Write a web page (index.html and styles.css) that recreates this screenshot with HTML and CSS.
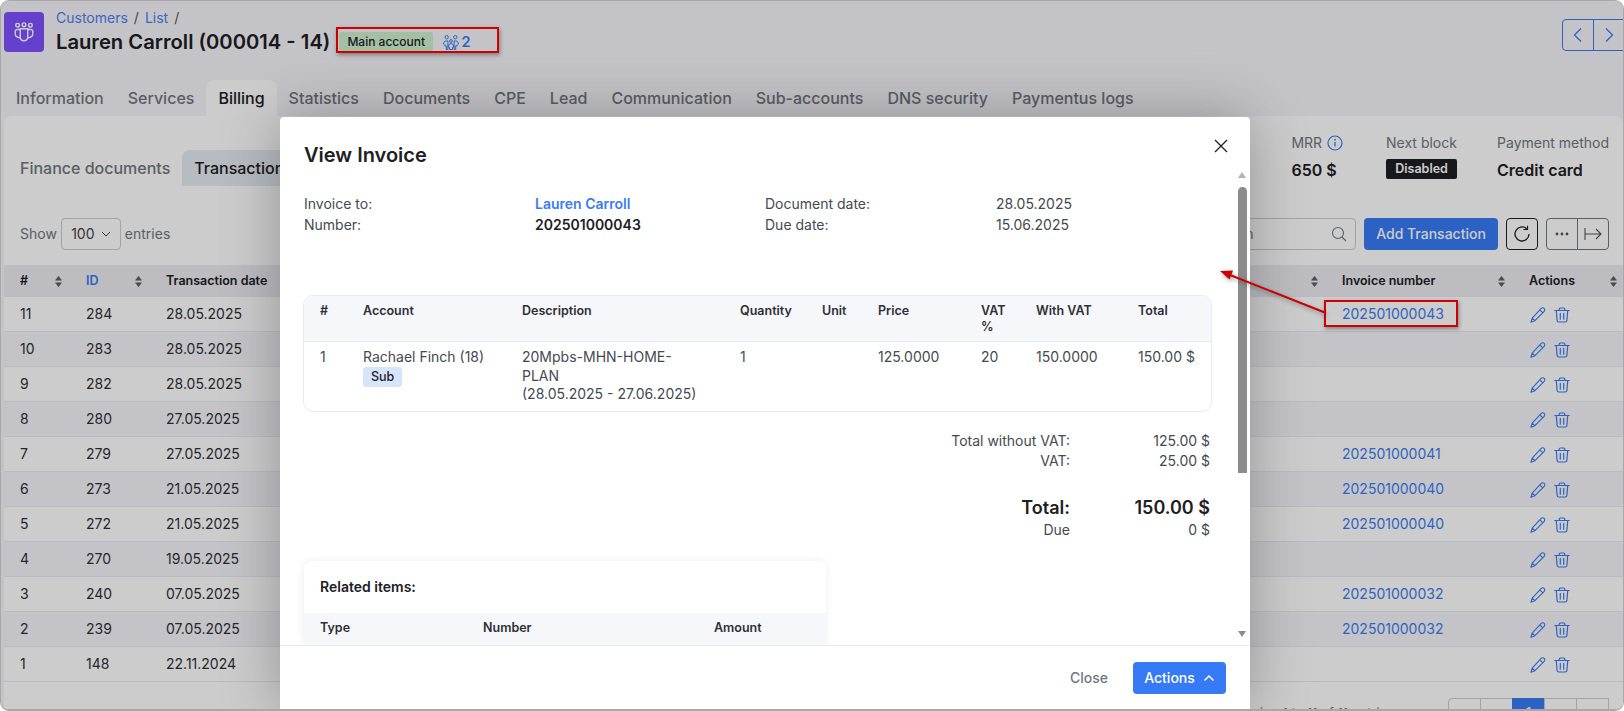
FILE: index.html
```html
<!DOCTYPE html>
<html lang="en">
<head>
<meta charset="utf-8">
<title>View Invoice</title>
<link rel="stylesheet" href="styles.css">
</head>
<body>
<svg class="sprites" width="0" height="0" aria-hidden="true">
  <symbol id="pencil" viewBox="0 0 16 16"><path d="M11.2 1.400a1.900 1.900 0 0 1 3 2.900L4.900 13.700.9 15.200l1.300-4.100zM9.800 2.900l3.100 3M2.200 11.100l2.700 2.600" fill="none" stroke="currentColor" stroke-width="1.100" stroke-linejoin="round"/></symbol>
  <symbol id="trash" viewBox="0 0 16 16"><path d="M.8 3.500h14.400M5.200 3.500V2.200c0-.7.500-1.200 1.200-1.200h3.200c.7 0 1.200.5 1.200 1.200v1.300M2.300 3.500l.8 10c.1.9.7 1.500 1.600 1.500h6.600c.9 0 1.500-.6 1.600-1.500l.8-10M6.300 6.400v5.800M9.700 6.400v5.800" fill="none" stroke="currentColor" stroke-width="1.200" stroke-linecap="round" stroke-linejoin="round"/></symbol>
  <symbol id="sort" viewBox="0 0 8 14"><path d="M4 1 7.400 5.600H.6zM4 13 .6 8.400h6.800z" fill="currentColor" stroke="currentColor" stroke-width=".6" stroke-linejoin="round"/></symbol>
  <symbol id="info" viewBox="0 0 16 16"><circle cx="8" cy="8" r="7" fill="none" stroke="currentColor" stroke-width="1.200"/><path d="M8 7v4.600" stroke="currentColor" stroke-width="1.300"/><circle cx="8" cy="4.700" r=".9" fill="currentColor"/></symbol>
</svg>

<div class="frame">
  <header class="top">
    <div class="tile">
      <svg width="20" height="20" viewBox="0 0 24 24" fill="none" stroke="#fff" stroke-width="1.700">
        <circle cx="4.300" cy="3.800" r="2.200"/><circle cx="12" cy="3.200" r="2.200"/><circle cx="19.700" cy="3.800" r="2.200"/>
        <path d="M7.500 9H4C2.500 9 1.500 10 1.500 11.500v3C1.500 16.500 3.500 18.500 7.500 19M16.500 9H20c1.500 0 2.500 1 2.500 2.500v3c0 2-2 4-6 4.500"/>
        <path d="M7.500 8h9v10c0 2.600-2 4.500-4.500 4.500S7.500 20.600 7.500 18z"/>
      </svg>
    </div>
    <div class="heading">
      <nav class="crumbs"><a>Customers</a><span>/</span><a>List</a><span>/</span></nav>
      <div class="title-row">
        <h1>Lauren Carroll (000014 - 14)</h1>
        <span class="main-badge">Main account</span>
        <a class="sub-count">
          <svg width="16" height="15" viewBox="0 0 16 15" fill="none" stroke="currentColor" stroke-width="1">
            <circle cx="3.700" cy="2.200" r="1.700"/><circle cx="12.300" cy="2.200" r="1.700"/><circle cx="8" cy="6" r="1.400"/>
            <path d="M.6 9.500c0-2.400 1-3.500 2.300-3.500h2v8.500H3.300v-3.700H1.800V9.500M15.400 9.500c0-2.400-1-3.500-2.300-3.500h-2v8.500h1.600v-3.700h1.500V9.500M5.500 11c0-1.500.8-2.300 2.500-2.300s2.500.8 2.500 2.300v1.300h-1v2.200h-3v-2.200h-1z"/>
          </svg>
          2
        </a>
      </div>
    </div>
    <div class="pager-nav">
      <button class="nav-btn"><svg width="12" height="16" viewBox="0 0 12 16" fill="none" stroke="currentColor" stroke-width="1.300"><path d="M9 1.500 2.500 8 9 14.500"/></svg></button>
      <button class="nav-btn"><svg width="12" height="16" viewBox="0 0 12 16" fill="none" stroke="currentColor" stroke-width="1.300"><path d="M3 1.500 9.500 8 3 14.500"/></svg></button>
    </div>
  </header>

  <nav class="tabs">
    <a>Information</a><a>Services</a><a class="active">Billing</a><a>Statistics</a><a>Documents</a><a>CPE</a><a>Lead</a><a>Communication</a><a>Sub-accounts</a><a>DNS security</a><a>Paymentus logs</a>
  </nav>

  <main class="card">
    <div class="card-head">
      <div class="subtabs"><a>Finance documents</a><a class="active">Transactions</a></div>
      <div class="stats">
        <svg class="info peek" width="16" height="16"><use href="#info"/></svg>
        <div class="stat"><div class="stat-label">MRR <svg class="info" width="16" height="16"><use href="#info"/></svg></div><div class="stat-value">650 $</div></div>
        <div class="stat"><div class="stat-label">Next block</div><div class="stat-value"><span class="disabled">Disabled</span></div></div>
        <div class="stat"><div class="stat-label">Payment method</div><div class="stat-value">Credit card</div></div>
      </div>
    </div>

    <div class="toolbar">
      <label class="show">Show <span class="select">100 <svg width="10" height="6" viewBox="0 0 10 6" fill="none" stroke="currentColor"><path d="M1 1l4 4 4-4"/></svg></span> entries</label>
      <div class="tools">
        <div class="search"><span>Search</span>
          <svg width="16" height="16" viewBox="0 0 16 16" fill="none" stroke="currentColor" stroke-width="1.100"><circle cx="7" cy="7" r="5.500"/><path d="m11 11 4 4"/></svg>
        </div>
        <button class="add">Add Transaction</button>
        <button class="tool refresh"><svg width="18" height="18" viewBox="0 0 18 18" fill="none" stroke="currentColor" stroke-width="1.300"><path d="M13.700 3.800A7 7 0 1 0 16 9"/><path d="M10.500 4.500h4V.8" stroke-width="1.200"/></svg></button>
        <div class="tool-group">
          <button class="tool"><svg width="14" height="4" viewBox="0 0 14 4" fill="currentColor"><circle cx="2" cy="2" r="1.400"/><circle cx="7" cy="2" r="1.400"/><circle cx="12" cy="2" r="1.400"/></svg></button>
          <button class="tool"><svg width="18" height="14" viewBox="0 0 18 14" fill="none" stroke="currentColor" stroke-width="1.100"><path d="M1 1v12M1 7h16M12 2l5 5-5 5"/></svg></button>
        </div>
      </div>
    </div>

    <table class="grid">
      <colgroup><col class="c-num"><col class="c-id"><col class="c-date"><col class="c-rest"><col class="c-inv"><col class="c-act"></colgroup>
      <thead><tr>
        <th><span class="th">#<svg class="sort"><use href="#sort"/></svg></span></th>
        <th><span class="th link">ID<svg class="sort"><use href="#sort"/></svg></span></th>
        <th><span class="th">Transaction date</span></th>
        <th><span class="th"><svg class="sort"><use href="#sort"/></svg></span></th>
        <th><span class="th">Invoice number<svg class="sort"><use href="#sort"/></svg></span></th>
        <th><span class="th th-last">Actions<svg class="sort"><use href="#sort"/></svg></span></th>
      </tr></thead>
      <tbody>
        <tr><td>11</td><td>284</td><td>28.05.2025</td><td></td><td><a>202501000043</a></td><td class="act"><svg><use href="#pencil"/></svg><svg><use href="#trash"/></svg></td></tr>
        <tr><td>10</td><td>283</td><td>28.05.2025</td><td></td><td></td><td class="act"><svg><use href="#pencil"/></svg><svg><use href="#trash"/></svg></td></tr>
        <tr><td>9</td><td>282</td><td>28.05.2025</td><td></td><td></td><td class="act"><svg><use href="#pencil"/></svg><svg><use href="#trash"/></svg></td></tr>
        <tr><td>8</td><td>280</td><td>27.05.2025</td><td></td><td></td><td class="act"><svg><use href="#pencil"/></svg><svg><use href="#trash"/></svg></td></tr>
        <tr><td>7</td><td>279</td><td>27.05.2025</td><td></td><td><a>202501000041</a></td><td class="act"><svg><use href="#pencil"/></svg><svg><use href="#trash"/></svg></td></tr>
        <tr><td>6</td><td>273</td><td>21.05.2025</td><td></td><td><a>202501000040</a></td><td class="act"><svg><use href="#pencil"/></svg><svg><use href="#trash"/></svg></td></tr>
        <tr><td>5</td><td>272</td><td>21.05.2025</td><td></td><td><a>202501000040</a></td><td class="act"><svg><use href="#pencil"/></svg><svg><use href="#trash"/></svg></td></tr>
        <tr><td>4</td><td>270</td><td>19.05.2025</td><td></td><td></td><td class="act"><svg><use href="#pencil"/></svg><svg><use href="#trash"/></svg></td></tr>
        <tr><td>3</td><td>240</td><td>07.05.2025</td><td></td><td><a>202501000032</a></td><td class="act"><svg><use href="#pencil"/></svg><svg><use href="#trash"/></svg></td></tr>
        <tr><td>2</td><td>239</td><td>07.05.2025</td><td></td><td><a>202501000032</a></td><td class="act"><svg><use href="#pencil"/></svg><svg><use href="#trash"/></svg></td></tr>
        <tr><td>1</td><td>148</td><td>22.11.2024</td><td></td><td></td><td class="act"><svg><use href="#pencil"/></svg><svg><use href="#trash"/></svg></td></tr>
      </tbody>
    </table>

    <div class="table-foot">
      <span class="count">Showing 1 to 11 of 11 entries</span>
      <div class="pages">
        <a><svg width="14" height="14" viewBox="0 0 14 14" fill="none" stroke="currentColor"><path d="M2 2v10M11 2 6 7l5 5"/></svg></a>
        <a><svg width="14" height="14" viewBox="0 0 14 14" fill="none" stroke="currentColor"><path d="M9 2 4 7l5 5"/></svg></a>
        <a class="current">1</a>
        <a><svg width="14" height="14" viewBox="0 0 14 14" fill="none" stroke="currentColor"><path d="m5 2 5 5-5 5"/></svg></a>
        <a><svg width="14" height="14" viewBox="0 0 14 14" fill="none" stroke="currentColor"><path d="M12 2v10M3 2l5 5-5 5"/></svg></a>
      </div>
    </div>
  </main>

  <div class="backdrop"></div>

  <section class="modal">
    <div class="modal-head">
      <h2>View Invoice</h2>
      <button class="close"><svg width="14" height="14" viewBox="0 0 14 14" fill="none" stroke="currentColor" stroke-width="1.300"><path d="m1 1 12 12M13 1 1 13"/></svg></button>
    </div>
    <div class="modal-body">
      <div class="meta">
        <span>Invoice to:</span><a class="strong link">Lauren Carroll</a><span>Document date:</span><span>28.05.2025</span>
        <span>Number:</span><b class="strong">202501000043</b><span>Due date:</span><span>15.06.2025</span>
      </div>
      <div class="items">
        <table>
          <colgroup><col class="i1"><col class="i2"><col class="i3"><col class="i4"><col class="i5"><col class="i6"><col class="i7"><col class="i8"><col class="i9"></colgroup>
          <thead><tr><th>#</th><th>Account</th><th>Description</th><th>Quantity</th><th>Unit</th><th>Price</th><th class="wrap-vat">VAT %</th><th>With VAT</th><th>Total</th></tr></thead>
          <tbody><tr>
            <td>1</td>
            <td>Rachael Finch (18)<br><span class="sub">Sub</span></td>
            <td>20Mpbs-MHN-HOME-PLAN<br>(28.05.2025 - 27.06.2025)</td>
            <td>1</td><td></td><td>125.0000</td><td>20</td><td>150.0000</td><td>150.00 $</td>
          </tr></tbody>
        </table>
      </div>
      <div class="totals">
        <span>Total without VAT:</span><span>125.00 $</span>
        <span>VAT:</span><span>25.00 $</span>
        <b class="grand">Total:</b><b class="grand">150.00 $</b>
        <span>Due</span><span>0 $</span>
      </div>
      <div class="related">
        <h3>Related items:</h3>
        <div class="related-head"><span>Type</span><span>Number</span><span>Amount</span></div>
      </div>
    </div>
    <div class="scrollbar">
      <i class="up"></i><i class="thumb"></i><i class="down"></i>
    </div>
    <div class="modal-foot">
      <button class="ghost">Close</button>
      <button class="primary">Actions <svg width="12" height="8" viewBox="0 0 12 8" fill="none" stroke="currentColor" stroke-width="1.500"><path d="m1.500 6.500 4.500-4.500 4.500 4.500"/></svg></button>
    </div>
  </section>

  <svg class="arrow" width="120" height="60" viewBox="0 0 120 60" aria-hidden="true">
    <path d="M112 47 16 9" stroke="#cc0000" stroke-width="2" fill="none"/>
    <path d="M6 5 19 4.500 15.500 13.500z" fill="#cc0000"/>
  </svg>
  <div class="mark-account"></div>
  <div class="mark-invoice"></div>
</div>
</body>
</html>
```

FILE: styles.css
```css
* { box-sizing: border-box; }
html, body { margin: 0; height: 711px; overflow: hidden; background: #fff; }
body { font: 14px/1.3 Inter, "Liberation Sans", sans-serif; color: #24272c; }
a { color: #3b7cf0; text-decoration: none; }
button { font: inherit; border: 0; background: none; padding: 0; color: inherit; }
h1, h2, h3 { margin: 0; }
.sprites { position: absolute; }

.frame {
  position: relative; width: 1624px; height: 711px; overflow: hidden;
  background: #f5f5fa; border: 1px solid #a8a8a8; border-bottom-width: 2px;
  border-radius: 9px;
}

.top { display: flex; align-items: flex-start; height: 79px; padding: 11px 0 0 3px; }
.tile { width: 40px; height: 40px; border-radius: 4px; background: #7f50ff; display: flex; align-items: center; justify-content: center; }
.heading { margin-left: 12px; }
.crumbs { display: flex; gap: 6px; font-size: 14px; line-height: 18px; margin-top: -3px; color: #555; }
.crumbs a { color: #4b80ef; }
.title-row { display: flex; align-items: center; margin-top: 2px; height: 26px; }
h1 { font-size: 20.200px; font-weight: 600; line-height: 26px; color: #1d2024; white-space: nowrap; }
.main-badge { background: #cfefcf; height: 20px; margin-left: 9px; padding: 0 8px; line-height: 20px; font-size: 12px; font-weight: 500; border-radius: 2px; color: #1d2024; width: 94px; white-space: nowrap; }
.sub-count { display: flex; align-items: center; gap: 2px; margin-left: 10px; color: #3b7cf0; font-size: 14.500px; font-weight: 600; }
.pager-nav { margin-left: auto; margin-top: 7px; margin-right: -2px; display: flex; }
.nav-btn { width: 32px; height: 32px; border: 1px solid #3b7cf0; color: #3b7cf0; display: flex; align-items: center; justify-content: center; margin-left: -1px; }
.nav-btn:first-child { border-radius: 4px 0 0 4px; }

.tabs { display: flex; height: 36px; padding-left: 3px; }
.tabs a { display: block; padding: 0 12px; height: 36px; line-height: 37px; font-size: 16px; font-weight: 500; color: #71767f; border-radius: 8px 8px 0 0; white-space: nowrap; }
.tabs a.active { background: #fff; color: #1d2024; }

.card { background: #fff; margin: 0 0 0 3px; height: 600px; border-radius: 8px 8px 0 0; }
.card-head { display: flex; justify-content: space-between; height: 102px; padding: 34px 14px 0 16px; }
.subtabs { display: flex; align-items: flex-start; }
.subtabs a { height: 36px; line-height: 36px; font-size: 16px; font-weight: 500; color: #71767f; white-space: nowrap; }
.subtabs a:first-child { margin-right: 12px; }
.subtabs a.active { background: #e5ebf2; color: #1d2024; padding: 0 12px; border-radius: 8px 8px 0 0; }
.stats { display: flex; }
.stat { margin-left: 43px; }
.stat:last-child { margin-left: 40px; }
.peek { margin-top: -17px; }
.stat-label { height: 18px; line-height: 18px; margin-top: -16px; font-size: 14px; color: #71767f; display: flex; align-items: center; gap: 5px; white-space: nowrap; }
.info { color: #3b7cf0; }
.stat-value { margin-top: 7px; height: 22px; line-height: 22px; font-size: 16px; font-weight: 600; color: #1d2024; white-space: nowrap; }
.disabled { display: block; width: 71px; height: 20px; margin-top: 2px; line-height: 20px; text-align: center; background: #1c1f23; color: #fff; font-size: 12.500px; font-weight: 600; border-radius: 2px; }

.toolbar { display: flex; justify-content: space-between; height: 32px; padding: 0 14px 0 16px; }
.show { display: flex; align-items: center; gap: 4px; color: #71767f; }
.select { display: flex; align-items: center; justify-content: center; gap: 6px; width: 60px; height: 32px; border: 1px solid #c9ccd2; border-radius: 4px; color: #444; }
.tools { display: flex; gap: 8px; }
.search { display: flex; align-items: center; justify-content: space-between; width: 156px; height: 32px; border: 1px solid #c9ccd2; border-radius: 4px; padding: 0 8px 0 6px; color: #71767f; }
.add { width: 134px; height: 32px; background: #367bf5; color: #fff; border-radius: 4px; font-weight: 500; font-size: 14px; }
.tool { width: 32px; height: 32px; border: 1px solid #71767f; display: flex; align-items: center; justify-content: center; color: #555; }
.refresh { border-color: #1d2024; border-radius: 4px; color: #1d2024; }
.tool-group { display: flex; }
.tool-group .tool:first-child { border-radius: 4px 0 0 4px; }
.tool-group .tool:last-child { border-radius: 0 4px 4px 0; margin-left: -1px; }

.grid { width: 1620px; margin: 15px 0 0; border-collapse: collapse; table-layout: fixed; }
.c-num { width: 66px; } .c-id { width: 80px; } .c-date { width: 160px; } .c-inv { width: 187px; } .c-act { width: 111px; }
.grid th { height: 31px; background: #ebecf2; padding: 2px 0 0 16px; text-align: left; font-size: 12.500px; font-weight: 600; color: #1d2024; white-space: nowrap; border-bottom: 1px solid #e7ebf0; }
.th { display: flex; align-items: center; justify-content: space-between; padding-right: 8px; }
.th.link { color: #3b7cf0; }
.th-last { padding-right: 7px; }
.sort { width: 7px; height: 13px; color: #5c6068; flex: none; margin-left: auto; }
.grid td { height: 35px; padding: 0 0 0 16px; border-bottom: 1px solid #e7ebf0; color: #2d3036; line-height: 18px; }
.grid tbody tr:nth-child(even) { background: #f6f6fb; }
.grid td a { color: #3b7cf0; }
.act { white-space: nowrap; }
.act svg { width: 16px; height: 16px; color: #3b7cf0; vertical-align: middle; margin-right: 8px; }
.act svg:first-child { margin-left: 1px; }

.table-foot { display: flex; justify-content: flex-end; align-items: flex-start; padding: 16px 14px 0 0; gap: 55px; }
.count { font-size: 13px; color: #71767f; line-height: 22px; margin-top: -2px; padding-top: 6px; white-space: nowrap; }
.pages { display: flex; height: 32px; }
.pages a { display: flex; align-items: center; justify-content: center; width: 33px; height: 32px; border: 1px solid #c9ccd2; margin-left: -1px; color: #555; }
.pages a:first-child { border-radius: 4px 0 0 4px; }
.pages a.current { background: #367bf5; border-color: #367bf5; color: #fff; }

.backdrop { position: absolute; inset: 0; background: rgba(0,0,0,.2); }

.modal {
  position: absolute; left: 279px; top: 116px; width: 970px; height: 595px;
  background: #fff; display: flex; flex-direction: column;
  box-shadow: 0 0 60px rgba(0,0,0,.28);
  border-radius: 4px 4px 0 0;
}
.modal-head { height: 62px; flex: none; padding: 25px 22px 0 24px; display: flex; justify-content: space-between; align-items: flex-start; }
h2 { font-size: 20px; font-weight: 600; line-height: 26px; color: #1d2024; }
.close { margin-top: -3px; color: #1d2024; width: 14px; height: 14px; display: flex; }
.modal-body { flex: 1; min-height: 0; overflow: hidden; padding: 16px 38px 0 24px; }
.meta { display: grid; grid-template-columns: 231px 230px 231px 1fr; row-gap: 2.500px; line-height: 18px; color: #444a52; }
.strong { font-weight: 600; color: #1d2024; }
.link.strong { color: #3b7cf0; }
.items { margin: 61px 0 0 -1px; border: 1px solid #e7ebf0; border-radius: 10px; overflow: hidden; }
.items table { width: 100%; border-collapse: collapse; table-layout: fixed; }
.i1 { width: 59px; } .i2 { width: 159px; } .i3 { width: 218px; } .i4 { width: 82px; } .i5 { width: 56px; } .i6 { width: 103px; } .i7 { width: 55px; } .i8 { width: 102px; } .i9 { width: 74px; }
.items th:first-child, .items td:first-child { padding-left: 16px; }
.items th { background: #f6f7fb; height: 46px; padding: 7px 6px 0 0; text-align: left; vertical-align: top; font-size: 12.500px; font-weight: 600; color: #2d3036; line-height: 16px; border-bottom: 1px solid #e7ebf0; }
.items th.wrap-vat { padding-right: 25px; }
.items td { padding: 6px 6px 7px 0; vertical-align: top; line-height: 18.500px; color: #444a52; font-size: 14px; }
.items td:nth-child(3) { padding-right: 40px; }
.sub { display: inline-block; height: 20px; line-height: 20px; padding: 0 8px; background: #d7e5fb; color: #1d2024; border-radius: 3px; font-size: 12.500px; font-weight: 500; }
.totals { display: grid; grid-template-columns: 1fr 140px; justify-items: end; margin-top: 19px; padding-right: 2px; line-height: 20px; color: #444a52; }
.grand { font-size: 18px; font-weight: 600; color: #1d2024; line-height: 24px; margin-top: 25px; }
.related { width: 522px; margin: 21px 0 0; border-radius: 8px 8px 0 0; box-shadow: 0 0 8px rgba(30,40,60,.08); }
.related h3 { font-size: 14px; font-weight: 600; line-height: 18px; padding: 17px 16px 17px; color: #1d2024; }
.related-head { display: grid; grid-template-columns: 163px 231px 1fr; height: 31px; padding: 0 16px; align-items: center; background: #f6f7fb; font-size: 12.500px; font-weight: 600; color: #2d3036; }
.scrollbar { position: absolute; right: 3px; top: 55px; width: 9px; height: 465px; }
.scrollbar i { display: block; position: absolute; }
.up { left: 0; top: 0; width: 0; border: 4.500px solid transparent; border-top: 0; border-bottom: 6px solid #b2b2b2; }
.thumb { left: 0; top: 15px; width: 9px; height: 286px; background: #8c8c8c; border-radius: 5px 5px 0 0; }
.down { left: 0; bottom: 0; width: 0; border: 4.500px solid transparent; border-bottom: 0; border-top: 6px solid #8c8c8c; }
.modal-foot { flex: none; height: 67px; border-top: 1px solid #e7ebf0; display: flex; justify-content: flex-end; align-items: flex-start; gap: 25px; padding: 16px 24px 0 0; }
.ghost { height: 32px; color: #71767f; font-weight: 500; }
.primary { width: 93px; height: 32px; background: #367bf5; color: #fff; border-radius: 4px; font-weight: 500; display: flex; align-items: center; justify-content: center; gap: 8px; }

.arrow { position: absolute; left: 1213px; top: 265px; filter: drop-shadow(1px 2px 2px rgba(0,0,0,.35)); }
.mark-account { position: absolute; left: 335px; top: 26px; width: 163px; height: 26px; border: 2px solid #cc0000; box-shadow: 1px 2px 4px rgba(0,0,0,.35); }
.mark-invoice { position: absolute; left: 1323px; top: 299px; width: 134px; height: 27px; border: 2px solid #cc0000; box-shadow: 1px 2px 4px rgba(0,0,0,.35); }
```
